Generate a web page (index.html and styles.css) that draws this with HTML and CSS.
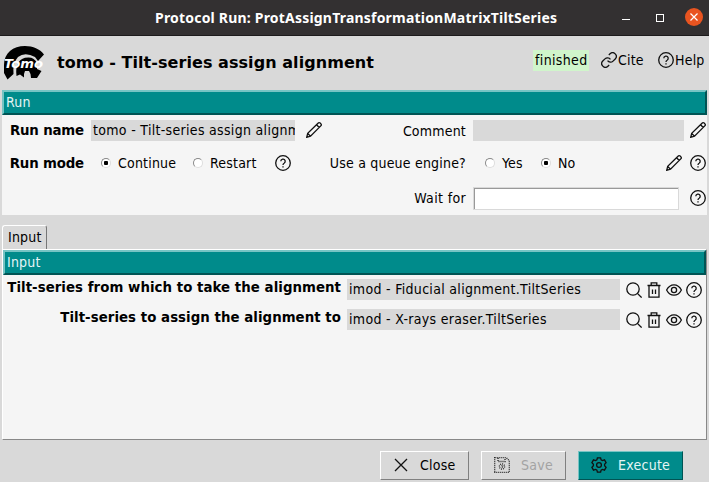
FILE: index.html
```html
<!DOCTYPE html>
<html lang="en">
<head>
<meta charset="utf-8">
<title>Protocol Run</title>
<link rel="stylesheet" href="styles.css">
</head>
<body>
<svg class="defs" width="0" height="0">
  <symbol id="help" viewBox="0 0 16 16"><circle cx="8" cy="8" r="7.3"/><path d="M5.8 6.3a2.2 2.2 0 1 1 3.3 1.9Q8 8.8 8 10"/><path d="M8 11.2v1.2"/></symbol>
  <symbol id="pencil" viewBox="0 0 16 16"><path d="M.7 15.3l1-3.9L12 1.2q1-1 2.200-.1l.7.8q.9 1-.1 2L4.500 14.200zM10.600 2.800l2.600 2.700M1.700 11.400l2.800 2.800"/></symbol>
  <symbol id="search" viewBox="0 0 16 16"><circle cx="7" cy="7" r="6.2"/><path d="M11.4 11.4l4.2 4.2"/></symbol>
  <symbol id="trash" viewBox="0 0 16 16"><path d="M1.500 3.500h13M5.200 3.300V.8h5.600v2.500M3 3.700v11.500h10V3.700M6.500 7.500v4.500M9.500 7.500v4.500"/></symbol>
  <symbol id="eye" viewBox="0 0 16 16"><path d="M.6 8Q3.3 2.8 8 2.8T15.4 8Q12.7 13.2 8 13.2T.6 8z"/><circle cx="8" cy="8" r="2.6"/></symbol>
</svg>
<header class="titlebar">
  <h1>Protocol Run: ProtAssignTransformationMatrixTiltSeries</h1>
  <div class="controls">
    <i class="minimize"></i><i class="maximize"></i>
    <i class="quit"><svg width="18" height="18" viewBox="0 0 18 18"><path d="M5.5 5.5l7 7M12.5 5.5l-7 7"/></svg></i>
  </div>
</header>
<section class="head">
  <svg class="logo" width="40" height="36" viewBox="0 0 40 36">
    <path d="M3.500 34.500L0 28V20C0 8 9 1 21 1C29 1 36 4 40 9.500L34 16L31 12Q21 6.500 14 12Q8.500 18 9.500 29z"/>
    <path d="M12.500 31Q10.500 16 21 12.800Q30 11 33 18L33 24L37.500 26L33 33H27L26.500 29L25 26H21L20 29V32.500L16 29.500z"/>
    <text x="0" y="23" textLength="39" lengthAdjust="spacingAndGlyphs">Tomo</text>
  </svg>
  <h2>tomo - Tilt-series assign alignment</h2>
  <span class="status">finished</span>
  <a class="link cite"><svg class="icon" viewBox="1 1 22 22"><path d="M10 13a5 5 0 0 0 7.540.54l3-3a5 5 0 0 0-7.070-7.070l-1.720 1.710M14 11a5 5 0 0 0-7.540-.54l-3 3a5 5 0 0 0 7.070 7.070l1.710-1.710"/></svg>Cite</a>
  <a class="link"><svg class="icon"><use href="#help"/></svg>Help</a>
</section>
<div class="bar">Run</div>
<section class="run">
  <div class="row first">
    <label class="strong">Run name</label><div class="field name">tomo - Tilt-series assign alignment</div>
    <svg class="icon edit"><use href="#pencil"/></svg>
    <label class="second">Comment</label><div class="field comment"></div>
    <svg class="icon end"><use href="#pencil"/></svg>
  </div>
  <div class="row mode">
    <label class="strong">Run mode</label>
    <span class="option continue"><i class="radio on"></i>Continue</span><span class="option restart"><i class="radio"></i>Restart</span>
    <svg class="icon"><use href="#help"/></svg>
    <label class="second">Use a queue engine?</label>
    <span class="option yes"><i class="radio"></i>Yes</span><span class="option"><i class="radio on"></i>No</span>
    <svg class="icon end"><use href="#pencil"/></svg><svg class="icon last"><use href="#help"/></svg>
  </div>
  <div class="row wait">
    <label class="second">Wait for</label><div class="entry"></div>
    <svg class="icon end"><use href="#help"/></svg>
  </div>
</section>
<nav><span class="tab">Input</span></nav>
<main>
  <div class="bar">Input</div>
  <div class="param"><label class="strong">Tilt-series from which to take the alignment</label><div class="field">imod - Fiducial alignment.TiltSeries</div>
    <div class="tools"><svg class="icon"><use href="#search"/></svg><svg class="icon"><use href="#trash"/></svg><svg class="icon"><use href="#eye"/></svg><svg class="icon"><use href="#help"/></svg></div></div>
  <div class="param"><label class="strong">Tilt-series to assign the alignment to</label><div class="field">imod - X-rays eraser.TiltSeries</div>
    <div class="tools"><svg class="icon"><use href="#search"/></svg><svg class="icon"><use href="#trash"/></svg><svg class="icon"><use href="#eye"/></svg><svg class="icon"><use href="#help"/></svg></div></div>
</main>
<footer>
  <button class="close"><svg class="icon" viewBox="0 0 16 16"><path d="M2 2l12 12M14 2L2 14"/></svg>Close</button>
  <button class="save"><svg class="icon" viewBox="0 0 16 16"><path d="M.7.7h11.6l3 3v11.6H.7zM4 1v3.5h7V1"/><circle cx="8" cy="9.5" r="2.6"/><circle cx="8" cy="9.5" r=".6"/></svg>Save</button>
  <button class="execute"><svg class="icon" viewBox="0 0 16 16"><path d="M6.400.8h3.200l.5 2.100 1.300.7 2.100-.7 1.600 2.800L13.600 7.200v1.600l1.500 1.500-1.600 2.800-2.100-.7-1.300.7-.5 2.100H6.400l-.5-2.100-1.300-.7-2.100.7L.9 10.300l1.500-1.500V7.200L.9 5.700l1.600-2.800 2.100.7 1.300-.7z"/><circle cx="8" cy="8" r="2.4"/></svg>Execute</button>
</footer>
</body>
</html>
```
FILE: styles.css
```css
* { box-sizing: border-box; }
body {
  margin: 0; width: 709px; height: 482px; overflow: hidden;
  background: #d9d9d9; color: #000;
  font: 14px/20px "DejaVu Sans Condensed", "DejaVu Sans", sans-serif;
  font-stretch: condensed;
  letter-spacing: .2px;
}
h1, h2 { margin: 0; }
.defs { position: absolute; }
.titlebar {
  height: 36px; display: flex; align-items: center; background: #333031;
  border-bottom: 1px solid #1d1b1c; color: #fff;
}
h1 { margin-left: 155px; width: 402px; white-space: nowrap; font: bold 14px/20px "Noto Sans", sans-serif; letter-spacing: .2px; }
.controls { margin-left: 65px; display: flex; align-items: center; }
.minimize { width: 8px; height: 1px; background: #fff; margin-top: 4px; }
.maximize { width: 8px; height: 8px; border: 1px solid #fff; margin-left: 26px; }
.quit { width: 18px; height: 18px; margin: -1px 0 0 21px; border-radius: 50%; background: #e95420; }
.controls i { flex: none; }
.quit svg { display: block; stroke: #fff; stroke-width: 1.2; }
.head { height: 54px; display: flex; align-items: center; padding: 0 4px 3px 4px; }
.logo { flex: none; margin-top: 3px; }
.logo text { font: italic bold 13px "DejaVu Sans", sans-serif; fill: #fff; letter-spacing: 0; }
h2 { margin-left: 13px; width: 476px; flex: none; white-space: nowrap; font: bold 16px/20px "DejaVu Sans", sans-serif; letter-spacing: .06px; padding-top: 2px; }
.status { flex: none; background: #d0f5cb; height: 21px; width: 56px; margin-top: -3px; padding-left: 2px; letter-spacing: .35px; }
.link { display: flex; align-items: center; white-space: nowrap; margin-top: -3px; }
.link .icon { margin-right: 1px; }
.cite { flex: none; width: 45px; margin: -3px 12px 0; }
.cite .icon { stroke-width: 1.8; }
.icon { width: 16px; height: 16px; flex: none; fill: none; stroke: #111; stroke-width: 1.3; }
.bar {
  height: 25px; margin: 0 2px; padding-left: 2px; line-height: 20px;
  background: #008b8b; color: #e5f5f5; border: 2px solid #005454;
  border-top-color: #77c4c4; border-left-color: #77c4c4;
}
.run { height: 100px; margin: 0 2px; padding-top: 5px; background: #f5f5f5; }
.row { display: flex; align-items: center; height: 21px; white-space: nowrap; }
.strong { font: bold 13.33px/20px "DejaVu Sans", sans-serif; font-stretch: normal; letter-spacing: .05px; text-align: right; }
.row .strong { width: 82px; margin-right: 7px; letter-spacing: -.15px; }
.field { height: 21px; padding-left: 2px; background: #d9d9d9; overflow: hidden; white-space: nowrap; letter-spacing: .31px; }
.name { width: 204px; }
.edit { margin-left: 11px; }
.second { text-align: right; width: 144px; margin-right: 7px; }
.comment { width: 211px; }
.first .end { margin-left: 6px; }
.first .icon { margin-top: -2px; }
.mode { margin-top: 11px; }
.mode .strong { padding-top: 2px; }
.mode .icon { margin-top: 1px; }
.option { display: flex; align-items: center; }
.radio { width: 10px; height: 10px; margin-right: 7px; border-radius: 50%; background: #fff; border: 1px solid #888; border-right-color: #ddd; border-bottom-color: #ddd; }
.on { background: radial-gradient(circle, #000 0 2px, #fff 2.5px); }
.continue { width: 92px; margin-left: 10px; }
.restart { width: 82px; }
.mode .second { width: 175px; margin-right: 19px; }
.yes { width: 56px; }
.mode .end { margin-left: auto; }
.mode .last { margin: 1px 1px 0 8px; }
.wait { margin-top: 13px; height: 24px; }
.wait .second { width: 464px; letter-spacing: .35px; }
.entry { width: 206px; height: 23px; background: #fff; border: 1px solid #d9d9d9; box-shadow: inset 1px 1px #999; }
.wait .end { margin-left: 11px; }
nav { padding: 10px 2px 0; height: 34px; }
.tab { display: block; width: 45px; height: 24px; padding-left: 5px; line-height: 23px; border: 1px solid #fff; border-right-color: #777; border-bottom: 0; border-radius: 3px 3px 0 0; }
main { height: 191px; margin: 0 2px; border: 1px solid #fff; border-right-color: #888; border-bottom-color: #888; background: #f5f5f5; }
main .bar { margin: 0; }
.param { height: 21px; margin: 4px 0 9px; display: flex; }
.param .strong { width: 338px; margin: -1px 6px 0 0; white-space: nowrap; }
.param .field { width: 273px; }
.tools { display: flex; gap: 4px; margin: 3px 0 0 6px; }
footer { display: flex; margin: 11px 0 0 380px; }
button { height: 29px; display: flex; align-items: center; padding: 0 0 1px 12px; background: #d9d9d9; border: 1px solid #fff; border-right-color: #808080; border-bottom-color: #808080; font: inherit; letter-spacing: .25px; color: #000; }
button .icon { margin-right: 11px; }
.close { width: 89px; }
.save { width: 85px; margin: 0 12px; color: #a3a3a3; }
.save .icon { stroke: #222; stroke-dasharray: 1 1; }
.execute { width: 105px; background: #008b8b; color: #e5f5f5; border-color: #77c4c4 #005454 #005454 #77c4c4; }
```
